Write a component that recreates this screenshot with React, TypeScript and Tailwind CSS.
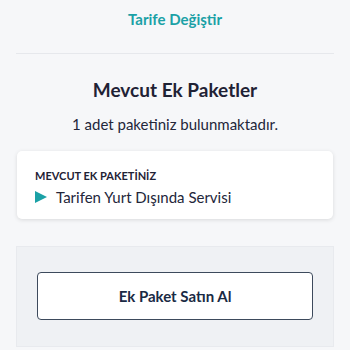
export default function App() {
  return (
    <div
      className="w-[350px] h-[350px] overflow-hidden bg-[#f6f7f9] text-[#1f2235]"
      style={{ fontFamily: 'Lato, "Noto Sans", sans-serif' }}
    >
      <div className="flex h-[53px] items-center justify-center pb-[17px] pt-[2px]">
        <span className="text-[15px] font-bold text-[#1ba1a6]">Tarife Değiştir</span>
      </div>
      <div className="mx-4 h-px bg-[#e6e8ec]" />

      <h2 className="mt-[24px] text-center text-[19px] font-bold leading-6">Mevcut Ek Paketler</h2>
      <p className="mt-[12px] text-center text-[15px] leading-5 text-[#23263a]">
        1 adet paketiniz bulunmaktadır.
      </p>

      <div className="mx-[17px] mt-[17px] h-[68px] rounded-[5px] bg-white px-[18px] pt-[19px] shadow-[0_1px_4px_rgba(0,0,0,0.12)]">
        <div className="text-[11px] font-bold leading-3 text-[#1f2235]">MEVCUT EK PAKETİNİZ</div>
        <div className="mt-[5px] flex items-center gap-[9px]">
          <svg width="12" height="12" viewBox="0 0 12 12">
            <path d="M0 0 L12 6 L0 12 Z" fill="#1ba1a6" />
          </svg>
          <span className="text-[15px] leading-5 text-[#23263a]">Tarifen Yurt Dışında Servisi</span>
        </div>
      </div>

      <div className="mx-[16px] mt-[27px] h-[101px] border border-[#e8eaee] bg-[#eff1f4] px-[20px] pt-[25px]">
        <button className="flex h-[48px] w-full items-center justify-center rounded-[4px] border border-[#3d4a5c] bg-white text-[15px] font-bold text-[#1a2a44]">
          Ek Paket Satın Al
        </button>
      </div>
    </div>
  );
}
